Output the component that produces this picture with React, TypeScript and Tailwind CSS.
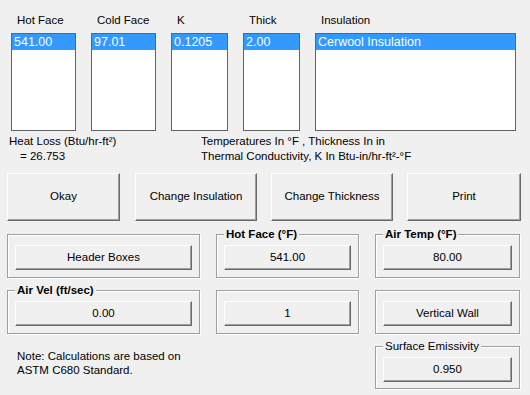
import React from "react";

function ListCol({ label, value, w }: { label: string; value: string; w: string }) {
  return (
    <div className="flex flex-col">
      <div className="pl-[6px] h-[14px] leading-[14px]">{label}</div>
      <div className={`mt-[6px] h-[98px] ${w} border border-[#646464] bg-white`}>
        <div className="h-[16px] bg-[#3399ff] text-white text-[12.5px] leading-[16px] pl-[2px] whitespace-nowrap">
          {value}
        </div>
      </div>
    </div>
  );
}

function BigButton({ label, w, ml }: { label: string; w: string; ml: string }) {
  return (
    <div
      className={`${w} ${ml} h-[48px] flex items-center justify-center border-t border-l border-t-white border-l-white border-r border-b border-r-[#696969] border-b-[#696969] shadow-[inset_-1px_-1px_0_#a0a0a0] bg-[#f0f0f0]`}
    >
      {label}
    </div>
  );
}

function SmallButton({ label }: { label: string }) {
  return (
    <div className="mx-[7px] mt-[10px] h-[25px] flex items-center justify-center border-t border-l border-t-white border-l-white border-r border-b border-r-[#696969] border-b-[#696969] shadow-[inset_-1px_-1px_0_#a0a0a0] bg-[#f0f0f0]">
      {label}
    </div>
  );
}

function Group({ title, bold = true, label }: { title?: string; bold?: boolean; label: string }) {
  return (
    <div className="relative border border-[#a0a0a0] shadow-[1px_1px_0_#fff,inset_1px_1px_0_#fff]">
      {title && (
        <div
          className={`absolute top-[-7px] left-[7px] px-[2px] bg-[#f0f0f0] leading-[13px] whitespace-nowrap ${
            bold ? "font-bold" : ""
          }`}
        >
          {title}
        </div>
      )}
      <SmallButton label={label} />
    </div>
  );
}

export default function App() {
  return (
    <div className="w-[530px] h-[395px] bg-[#f0f0f0] font-['Liberation_Sans',Arial,sans-serif] text-[11.5px] text-black overflow-hidden">
      <div className="flex pl-[11px] pt-[13px] gap-[15px]">
        <ListCol label="Hot Face" value="541.00" w="w-[65px]" />
        <ListCol label="Cold Face" value="97.01" w="w-[65px]" />
        <ListCol label="K" value="0.1205" w="w-[57px]" />
        <ListCol label="Thick" value="2.00" w="w-[57px]" />
        <ListCol label="Insulation" value="Cerwool Insulation" w="w-[201px]" />
      </div>

      <div className="flex pl-[9px] mt-[3px] leading-[15px]">
        <div className="w-[192px]">
          <div>Heat Loss (Btu/hr-ft²)</div>
          <div className="pl-[11px]">= 26.753</div>
        </div>
        <div>
          <div>Temperatures In °F , Thickness In in</div>
          <div>Thermal Conductivity, K In Btu-in/hr-ft²-°F</div>
        </div>
      </div>

      <div className="flex pl-[7px] mt-[9px]">
        <BigButton label="Okay" w="w-[113px]" ml="" />
        <BigButton label="Change Insulation" w="w-[122px]" ml="ml-[15px]" />
        <BigButton label="Change Thickness" w="w-[122px]" ml="ml-[14px]" />
        <BigButton label="Print" w="w-[114px]" ml="ml-[14px]" />
      </div>

      <div className="grid grid-cols-[193px_143px_145px] grid-rows-[44px_44px_43px] gap-x-[16px] gap-y-[12px] pl-[7px] mt-[13px]">
        <Group label="Header Boxes" />
        <Group title="Hot Face (°F)" label="541.00" />
        <Group title="Air Temp (°F)" label="80.00" />
        <Group title="Air Vel (ft/sec)" label="0.00" />
        <Group label="1" />
        <Group label="Vertical Wall" />
        <div className="pl-[10px] pt-[3px] leading-[14px]">
          <div>Note: Calculations are based on</div>
          <div>ASTM C680 Standard.</div>
        </div>
        <div />
        <Group title="Surface Emissivity" bold={false} label="0.950" />
      </div>
    </div>
  );
}
